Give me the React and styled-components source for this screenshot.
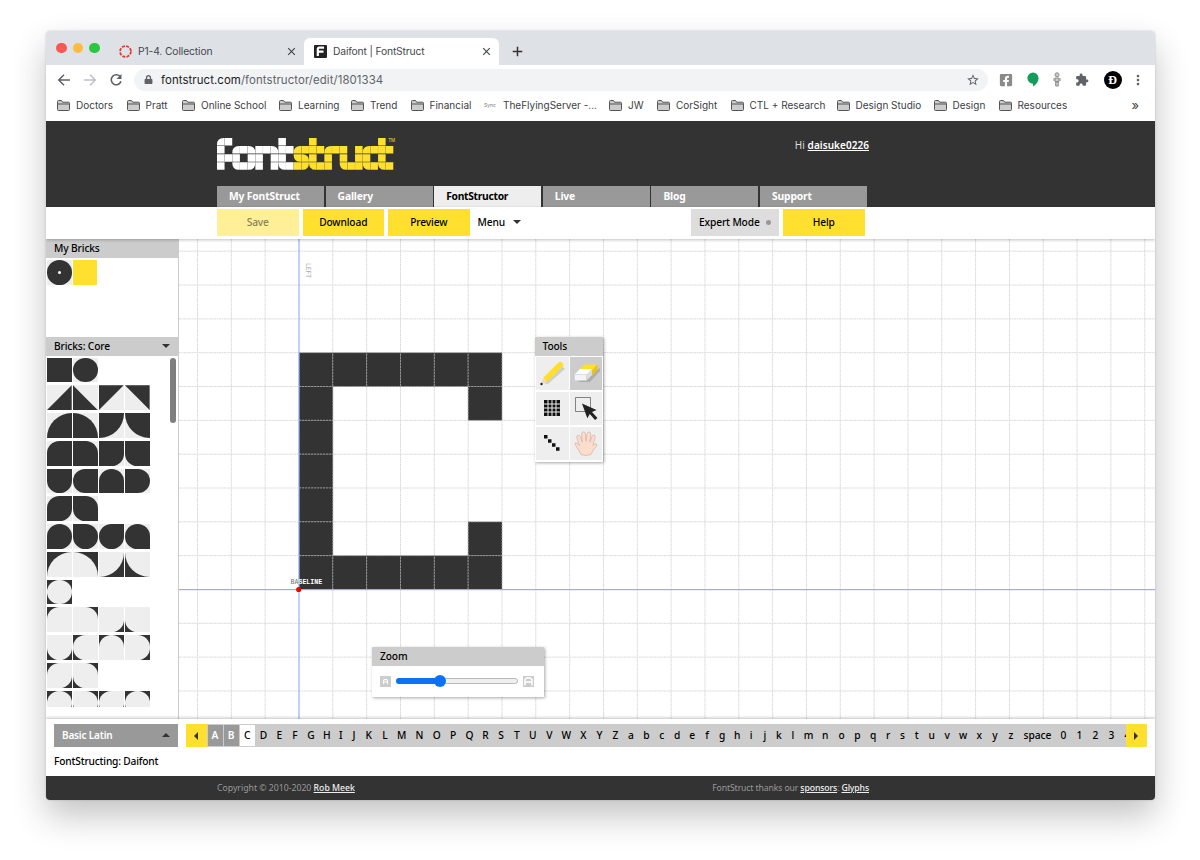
import React, { useState } from "react";
import styled, { createGlobalStyle } from "styled-components";
import { FaFacebookSquare, FaLock } from "react-icons/fa";
import { MdExtension, MdStarBorder, MdMoreVert } from "react-icons/md";

const GlobalStyle = createGlobalStyle`
  * {
    box-sizing: border-box;
  }

  body {
    margin: 0;
    background: #fff;
    overflow: hidden;
  }
`;

const Desktop = styled.div`
  height: 860px;
  padding: 31px 46px 0;
  font-family: "Noto Sans", "Open Sans", sans-serif;
  font-size: 10px;
  color: #000;
  white-space: nowrap;
`;

const Window = styled.div`
  width: 1108.5px;
  height: 768.5px;
  display: flex;
  flex-direction: column;
  border-radius: 4px;
  overflow: hidden;
  background: #fff;
  box-shadow: 0 0 2px rgba(0, 0, 0, 0.22), 0 16px 34px rgba(0, 0, 0, 0.24);
`;

/* ---------- browser ---------- */

const TabStrip = styled.div`
  height: 34px;
  flex: none;
  display: flex;
  align-items: flex-end;
  background: #dee1e6;
  font-family: Inter, sans-serif;
`;

const Lights = styled.div`
  display: flex;
  gap: 6px;
  height: 34px;
  align-items: center;
  padding: 0 0 0 10px;
  width: 65px;
`;

const Light = styled.span`
  width: 10.5px;
  height: 10.5px;
  border-radius: 50%;
  background: ${(props) => props.$color};
`;

const BrowserTab = styled.div`
  display: flex;
  align-items: center;
  width: ${(props) => props.$width}px;
  height: 27px;
  padding: 0 8px 1px ${(props) => (props.$active ? 10 : 8)}px;
  gap: 6px;
  border-radius: 6px 6px 0 0;
  background: ${(props) => (props.$active ? "#fff" : "transparent")};
  color: #45484c;
  font-size: 10.3px;
  letter-spacing: ${(props) => (props.$active ? -0.16 : -0.12)}px;
`;

const TabTitle = styled.span`
  flex: 1;
`;

const NewTab = styled.div`
  display: flex;
  align-items: center;
  height: 27px;
  padding-left: 13px;
`;

const AddressRow = styled.div`
  height: 29px;
  flex: none;
  display: flex;
  align-items: center;
  padding: 0 9px 0 11px;
  color: #5f6368;
  font-family: Inter, sans-serif;
`;

const NavIcons = styled.div`
  display: flex;
  gap: 12px;
  width: 77px;
`;

const AddressBar = styled.div`
  display: flex;
  align-items: center;
  width: 854px;
  height: 22px;
  padding: 0 8px 0 10px;
  border-radius: 11px;
  background: #f1f3f4;
  font-size: 11.4px;
  letter-spacing: 0.09px;
`;

const Url = styled.span`
  flex: 1;
  padding-left: 8px;
  color: #5f6368;

  b {
    font-weight: 400;
    color: #202124;
  }
`;

const Extensions = styled.div`
  flex: 1;
  display: flex;
  align-items: center;
  justify-content: space-between;
  padding-left: 11px;
`;

const ExtensionGroup = styled.div`
  display: flex;
  align-items: center;
  gap: 8px;
`;

const Avatar = styled.span`
  width: 18px;
  height: 18px;
  border-radius: 50%;
  background: #000;
  color: #fff;
  font: bold 12px/18px "Liberation Serif", serif;
  text-align: center;
`;

const Bookmarks = styled.div`
  height: 27px;
  flex: none;
  display: flex;
  align-items: center;
  padding: 0 0 5px 11px;
  color: #3c4043;
  font-family: Inter, sans-serif;
  font-size: 10px;
`;

const Bookmark = styled.div`
  display: flex;
  align-items: center;
  gap: 6px;
  width: ${(props) => props.$width}px;
`;

const SyncIcon = styled.span`
  font-size: 5px;
  width: 13px;
  color: #777;
`;

const More = styled.span`
  font-size: 13px;
`;

/* ---------- site header ---------- */

const Header = styled.header`
  height: 86px;
  flex: none;
  display: flex;
  flex-direction: column;
  justify-content: space-between;
  padding: 16.5px 0 0 171px;
  background: #333;
  color: #fff;
`;

const HeaderTop = styled.div`
  display: flex;
  justify-content: space-between;
  width: 652px;
`;

const Hello = styled.div`
  font-size: 10px;
  line-height: 14px;
  letter-spacing: 0.05px;
  color: #ddd;
`;

const Link = styled.a`
  color: ${(props) => props.$color || "#fff"};
  font-weight: ${(props) => props.$weight || 600};
  text-decoration: underline;
`;

const NavTabs = styled.nav`
  display: flex;
  gap: 1.6px;
`;

const NavTab = styled.a`
  width: 107px;
  height: 21px;
  padding-left: 12px;
  line-height: 21px;
  font-size: 10.3px;
  font-weight: 700;
  letter-spacing: ${(props) => (props.$active ? -0.3 : -0.15)}px;
  background: ${(props) => (props.$active ? "#eee" : "#999")};
  color: ${(props) => (props.$active ? "#000" : "#fff")};
`;

const Toolbar = styled.div`
  height: 32px;
  flex: none;
  display: flex;
  gap: 4px;
  padding: 2px 0 0 171px;
  background: #fff;
  box-shadow: 0 1px 3px rgba(0, 0, 0, 0.25);
  z-index: 1;
`;

const Button = styled.button`
  width: ${(props) => props.$width || 81.5}px;
  height: 26.5px;
  padding: 0;
  border: 0;
  background: ${(props) => props.$bg || "#ffe02f"};
  color: #000;
  font: 500 10.2px "Noto Sans", sans-serif;
  letter-spacing: -0.12px;

  &:disabled {
    background: #fff097;
    color: #88825c;
  }
`;

const MenuButton = styled(Button)`
  display: flex;
  align-items: center;
  gap: 8px;
  padding-left: 4px;
  margin-right: 73.5px;
`;

const ExpertButton = styled(Button)`
  display: flex;
  align-items: center;
  justify-content: space-between;
  padding: 0 8px;
`;

const Dot = styled.span`
  width: 5px;
  height: 5px;
  border-radius: 50%;
  background: #999;
`;

const Caret = styled.span`
  border-left: 4px solid transparent;
  border-right: 4px solid transparent;
  ${(props) =>
    props.$up
      ? "border-bottom: 4.5px solid #333;"
      : "border-top: 4.5px solid #333;"}
`;

const SideCaret = styled.span`
  border-top: 4px solid transparent;
  border-bottom: 4px solid transparent;
  ${(props) =>
    props.$left
      ? "border-right: 4px solid #333;"
      : "border-left: 4px solid #333;"}
`;

/* ---------- editor ---------- */

const Editor = styled.main`
  display: flex;
  height: 479.5px;
  flex: none;
  overflow: hidden;
`;

const Sidebar = styled.aside`
  width: 132.5px;
  flex: none;
  border-right: 1px solid #ccc;
`;

const PanelTitle = styled.div`
  display: flex;
  align-items: center;
  justify-content: space-between;
  height: 19px;
  padding: 0 8px 1px;
  background: #ccc;
  font-size: 10.2px;
  font-weight: 500;
  letter-spacing: -0.12px;
`;

const MyBricks = styled.div`
  display: flex;
  gap: 1px;
  height: 79px;
  padding: 2px 0 0 1px;
`;

const BrickArea = styled.div`
  display: flex;
  justify-content: space-between;
  height: 351.5px;
  padding: 1.6px 2px 0 1px;
  overflow: hidden;
`;

const BrickRows = styled.div`
  display: flex;
  flex-direction: column;
  gap: 3px;
  height: 349.5px;
  overflow: hidden;
`;

const BrickRow = styled.div`
  display: flex;
  flex: none;
  gap: 1.3px;
`;

const BrickTile = styled.div`
  width: 24.7px;
  height: 24.75px;
  background: ${(props) => (props.$invert ? "#333" : "#eee")};
`;

const BrickShape = styled.div`
  display: flex;
  align-items: center;
  justify-content: center;
  height: 100%;
  background: ${(props) => props.$color};
  border-radius: ${(props) => props.$round || 0};
  clip-path: ${(props) => props.$clip || "none"};
`;

const Pinhole = styled.span`
  width: 3px;
  height: 3px;
  border-radius: 50%;
  background: #fff;
`;

const ScrollThumb = styled.div`
  width: 5.5px;
  height: 65px;
  border-radius: 3px;
  background: #7f7f7f;
`;

const Canvas = styled.div`
  position: relative;
  flex: 1;
`;

const GlyphSvg = styled.svg`
  display: block;
`;

const Floating = styled.section`
  position: absolute;
  left: ${(props) => props.$left}px;
  top: ${(props) => props.$top}px;
  width: ${(props) => props.$width}px;
  background: #fff;
  box-shadow: 1px 1px 3px rgba(0, 0, 0, 0.35);
`;

const ToolGrid = styled.div`
  display: grid;
  grid-template-columns: 33px 32.5px;
  grid-auto-rows: 33px;
  gap: 2px 1px;
  padding: 1px 1px 2px;
`;

const Tool = styled.div`
  display: flex;
  align-items: center;
  justify-content: center;
  background: ${(props) => (props.$active ? "#ccc" : "#eee")};
`;

const ZoomBody = styled.div`
  display: flex;
  align-items: center;
  gap: 5px;
  height: 31px;
  padding: 0 10px 0 8px;
`;

const Track = styled.div`
  flex: 1;
  display: flex;
  align-items: center;
  height: 6.5px;
  border: 1px solid #b9b9b9;
  border-radius: 4px;
  background: #efefef;
`;

const TrackFill = styled.div`
  height: 6.5px;
  margin-left: -1px;
  border-radius: 4px 0 0 4px;
  background: #0b72f5;
`;

const Thumb = styled.span`
  flex: none;
  width: 12px;
  height: 12px;
  margin-left: -6px;
  border-radius: 50%;
  background: #0b72f5;
`;

/* ---------- character strip and footer ---------- */

const BottomBar = styled.div`
  flex: 1;
  padding: 5.5px 8px 0;
  box-shadow: 0 -1px 3px rgba(0, 0, 0, 0.25);
  background: #fff;
  z-index: 1;
`;

const CharRow = styled.div`
  display: flex;
  height: 23px;
`;

const SetSelect = styled.div`
  display: flex;
  align-items: center;
  justify-content: space-between;
  width: 124px;
  margin-right: 8px;
  padding: 0 8px 1px;
  background: #999;
  color: #fff;
  font-size: 10px;
  font-weight: 600;
  letter-spacing: -0.17px;
`;

const Arrow = styled.div`
  display: flex;
  align-items: center;
  justify-content: center;
  flex: none;
  width: 20.5px;
  background: #ffe02f;
`;

const Chars = styled.div`
  flex: 1;
  display: flex;
  align-items: center;
  overflow: hidden;
  padding-left: 1px;
  background: #ccc;
`;

const Char = styled.span`
  flex: none;
  width: ${(props) => props.$width}px;
  height: 21px;
  line-height: 20px;
  text-align: center;
  font-size: 10.2px;
  font-weight: ${(props) => (props.$state === "done" ? 600 : 500)};
  color: ${(props) => (props.$state === "done" ? "#fff" : "#000")};
  background: ${(props) =>
    ({ done: "#999", current: "#fff" }[props.$state] || "transparent")};
  border-right: 1px solid ${(props) => (props.$state ? "#ccc" : "transparent")};
`;

const Status = styled.div`
  padding-top: 7px;
  line-height: 15px;
  font-size: 10.2px;
  font-weight: 500;
  letter-spacing: -0.17px;
`;

const Footer = styled.footer`
  display: flex;
  align-items: center;
  justify-content: space-between;
  height: 23.5px;
  flex: none;
  padding: 0 285.5px 0 171px;
  background: #333;
  color: #999;
  font-size: 8.7px;
  letter-spacing: 0;
  z-index: 1;
`;

const Sponsors = styled.span`
  letter-spacing: -0.13px;
`;

/* ---------- data ---------- */

const bookmarks = [
  ["Doctors", 69.5],
  ["Pratt", 55.5],
  ["Online School", 97],
  ["Learning", 72],
  ["Trend", 59.5],
  ["Financial", 73.5],
  ["TheFlyingServer -...", 125],
  ["JW", 48],
  ["CorSight", 73.5],
  ["CTL + Research", 106],
  ["Design Studio", 97],
  ["Design", 65],
  ["Resources", 133],
];

const navItems = ["My FontStruct", "Gallery", "FontStructor", "Live", "Blog", "Support"];

// [row, col, rounded corner]
const logoBricks = [
  [0, 0, "tl"], [0, 1], [1, 0], [2, 0], [2, 1], [3, 0],
  [1, 2, "tl"], [1, 3], [1, 4, "tr"], [2, 2], [2, 4],
  [3, 2, "bl"], [3, 3], [3, 4, "br"],
  [1, 5], [1, 6], [1, 7, "tr"], [2, 5], [2, 7], [3, 5], [3, 7],
  [0, 8], [1, 8], [1, 9], [2, 8], [3, 8, "bl"], [3, 9],
  [1, 10, "tl"], [1, 11], [2, 10, "bl"], [2, 11, "tr"],
  [3, 10], [3, 11, "br"],
  [0, 12], [1, 12], [1, 13], [2, 12], [3, 12, "bl"], [3, 13],
  [1, 14, "tl"], [1, 15], [2, 14], [3, 14],
  [1, 16], [1, 18], [2, 16], [2, 18], [3, 16, "bl"], [3, 17], [3, 18],
  [1, 19, "tl"], [1, 20], [2, 19], [3, 19, "bl"], [3, 20],
  [0, 21], [1, 21], [1, 22], [2, 21], [3, 21, "bl"], [3, 22],
];

const logoShapes = {
  tl: "M0 8V7Q0 0 7 0H8V8z",
  tr: "M0 0H1Q8 0 8 7V8H0z",
  bl: "M0 0H8V8H7Q0 8 0 1z",
  br: "M0 0H8V1Q8 8 1 8H0z",
  all: "M0 0H8V8H0z",
};

const h = "50%";
const corner = (tl, tr, br, bl) => `${tl} ${tr} ${br} ${bl}`;
const full = [corner("100%", 0, 0, 0), corner(0, "100%", 0, 0), corner(0, 0, "100%", 0), corner(0, 0, 0, "100%")];
const single = [corner(h, 0, 0, 0), corner(0, h, 0, 0), corner(0, 0, h, 0), corner(0, 0, 0, h)];
const pair = [corner(0, 0, h, h), corner(h, 0, 0, h), corner(h, h, 0, 0), corner(0, h, h, 0)];
const diagonal = [corner(h, 0, h, 0), corner(0, h, 0, h)];
const triple = [corner(h, h, h, 0), corner(0, h, h, h), corner(h, 0, h, h), corner(h, h, 0, h)];

const brickRows = [
  { round: [0, h] },
  {
    clip: [
      "polygon(0 100%, 100% 0, 100% 100%)",
      "polygon(0 0, 100% 100%, 0 100%)",
      "polygon(0 0, 100% 0, 0 100%)",
      "polygon(0 0, 100% 0, 100% 100%)",
    ],
  },
  { round: full },
  { round: single },
  { round: pair },
  { round: diagonal },
  { round: triple },
  { round: full, invert: true },
  { round: [h], invert: true },
  { round: single, invert: true },
  { round: pair, invert: true },
  { round: diagonal, invert: true },
  { round: triple, invert: true },
];

const chars = [..."ABCDEFGHIJKLMNOPQRSTUVWXYZabcdefghijklmnopqrstuvwxyz", "space", ..."01234"];

// centre of every character on the strip
const stops = [
  215.5, 231.5, 247.5, 264, 280, 295.5, 311, 328, 342, 353, 369.5, 385, 402, 420,
  437.5, 453.5, 470, 486, 501.5, 517, 533.5, 549.5, 567, 584, 600, 616, 631.5,
  647, 662.5, 677.5, 693, 707.5, 722.5, 738, 752, 765, 779.5, 793, 808.5, 826,
  842, 858, 874, 889, 903, 917, 932, 947.5, 963.5, 980, 995.5, 1010.5, 1037,
  1063, 1079, 1095, 1111, 1127, 1143,
];
const charWidth = (i) => {
  // "space" is wider than its neighbours
  if (chars[i] === "z") return 17;
  if (chars[i] === "space") return 36;
  if (chars[i] === "0") return 16;
  if (i === 0) return 16;
  return (stops[i + 1] - stops[i - 1]) / 2;
};

const CELL = 33.83;
const ORIGIN = { x: 120, y: 350.5 };
const glyph = [
  "######",
  "#....#",
  "#.....",
  "#.....",
  "#.....",
  "#....#",
  "######",
];

/* ---------- icons ---------- */

const Logo = () => (
  <svg width="180" height="33" viewBox="0 0 180 33">
    {logoBricks.map(([row, col, round]) => (
      <path
        key={`${row}-${col}`}
        d={logoShapes[round || "all"]}
        transform={`translate(${col * 7.67} ${row * 8.1}) scale(.945 .94)`}
        fill={col < 10 ? "#fff" : "#ffe02f"}
      />
    ))}
    <text x="171.5" y="4" fill="#ffe02f" fontSize="4.500">
      TM
    </text>
  </svg>
);

const Cross = () => (
  <svg width="9" height="9" viewBox="0 0 9 9" stroke="#45484c" strokeWidth="1.2">
    <path d="M1.2 1.2l6.6 6.6M7.8 1.2L1.2 7.8" />
  </svg>
);

const Folder = () => (
  <svg width="13" height="11" viewBox="0 0 13 11" stroke="#555" strokeWidth="1">
    <path d="M.5 9.5v-8q0-1 1-1h3l1.2 1.7h5.8q1 0 1 1v6.3q0 1-1 1h-10q-1 0-1-1z" fill="#ccc" />
    <path d="M1 4h11" />
  </svg>
);

const Pencil = () => (
  <svg width="28" height="28" viewBox="0 0 28 28">
    <path d="M5 24l19-17 3 3-17 15z" fill="#000" opacity=".13" />
    <path d="M5 19L21 3q1.600-.8 3.600 1.200 1.400 1.600.4 3.200L9 23z" fill="#ffdf2b" />
    <path d="M5 19l4 4-5.400 2z" fill="#f3d8b7" />
    <circle cx="3.500" cy="25" r="1.200" fill="#222" />
  </svg>
);

const Eraser = () => (
  <svg width="28" height="26" viewBox="0 0 28 26">
    <path d="M6 22h12l10-11v-3z" fill="#000" opacity=".15" />
    <path d="M8 9l4.500-4.500h13L20 11l-1-2z" fill="#ffdf2b" />
    <path d="M25.500 4.500v5.500L19.500 16.500V11z" fill="#e8c11c" />
    <path d="M2.500 14.500L8 9h12l-5.500 5.500z" fill="#fff" />
    <path d="M2.500 14.500h12v6h-12z" fill="#f4f4f4" stroke="#ccc" strokeWidth=".5" />
    <path d="M14.500 14.500l5.500-5.500v6l-5.500 5.500z" fill="#ddd" />
  </svg>
);

const GridIcon = () => (
  <svg width="16" height="16" viewBox="0 0 16 16">
    <path d="M0 0h16v16H0z" fill="#111" />
    <path d="M4 0v16M8 0v16M12 0v16M0 4h16M0 8h16M0 12h16" stroke="#eee" strokeWidth="1" />
  </svg>
);

const SelectIcon = () => (
  <svg width="26" height="26" viewBox="0 0 26 26">
    <path d="M2.500 2.500h15v14h-15z" fill="none" stroke="#555" strokeWidth=".7" />
    <path d="M9 8.500l14.500 6.500-4.500 2 5.500 6-2.500 2-5.200-6-2.500 4.300z" fill="#222" />
  </svg>
);

const LineIcon = () => (
  <svg width="16" height="16" viewBox="0 0 16 16" fill="#111">
    <path d="M0 0h3.500v3.500H0zM4 4.200h3.500v3.500H4zM8 8.300h3.500v3.500H8zM12 12.300h3.500v3.500H12z" />
  </svg>
);

const HandIcon = () => (
  <svg width="26" height="26" viewBox="0 0 26 26">
    <path
      d="M8 24.500q-2-4-5.600-9.500-1.200-2 .5-2.200 1.600 0 3.600 2.700L3.700 7.500q-.2-2 1.500-2.200t2.300 1.800l1.700 5L8.600 3.900q.1-1.900 1.800-2t2 1.900l.6 7.500 1.200-7.900q.5-1.700 2-1.400t1.600 2.100l-.9 8 2.200-6q.8-1.600 2.200-1t.9 2.200l-2.300 8.200q1.700-2.300 3.400-1.700 1.400.8 0 2.700Q19.500 20 18 24.500 13 26.500 8 24.500z"
      fill="#fcdccd"
      stroke="#c9a99c"
      strokeWidth=".6"
    />
  </svg>
);

const ZoomIcon = ({ large }) => (
  <svg width="11" height="11" viewBox="0 0 11 11">
    <path d="M0 0h11v11H0z" fill="#ccc" />
    {large ? (
      <path d="M2 9.500v-6l1.500-1.500h4l1.500 1.500v6M2 6h7" fill="none" stroke="#fff" strokeWidth="1.500" />
    ) : (
      <path d="M3.500 8V4.500l1-1h2l1 1V8M3.500 6h4" fill="none" stroke="#fff" strokeWidth="1.100" />
    )}
  </svg>
);

const GlyphCanvas = () => {
  const columns = Array.from({ length: 29 }, (_, i) => ORIGIN.x + (i - 3) * CELL);
  const rows = Array.from({ length: 14 }, (_, i) => ORIGIN.y + (i - 10) * CELL);
  const top = ORIGIN.y - glyph.length * CELL;

  return (
    <GlyphSvg width="976" height="479.5">
      {columns.map((x) => (
        <path key={x} d={`M${x} 0V480`} stroke="#dcdcdc" strokeDasharray="2 .5" />
      ))}
      {rows.map((y) => (
        <path key={y} d={`M0 ${y}H976`} stroke="#dcdcdc" strokeDasharray="2 .5" />
      ))}
      {glyph.map((line, r) =>
        [...line].map(
          (c, i) =>
            c === "#" && (
              <rect
                key={`${r}-${i}`}
                x={ORIGIN.x + i * CELL}
                y={top + r * CELL}
                width={CELL}
                height={CELL}
                fill="#333"
                stroke="#a8a8a8"
                strokeWidth=".7"
                strokeDasharray="2 1"
              />
            )
        )
      )}
      {/* left side bearing and baseline */}
      <rect x={ORIGIN.x - 0.5} y="0" width="1" height="480" fill="#8ab4f8" />
      <rect x="0" y={ORIGIN.y - 0.5} width="976" height="1.2" fill="#8ab4f8" />
      <text x="111.500" y="344.500" fill="#999" fontFamily="Liberation Mono, monospace" fontWeight="bold" fontSize="6.600">
        BA<tspan fill="#fff">SELINE</tspan>
      </text>
      <text transform="translate(126.500 24) rotate(90)" fill="#aaa" fontFamily="Liberation Mono, monospace" fontSize="6.300">
        LEFT
      </text>
      <circle cx={ORIGIN.x - 0.3} cy={ORIGIN.y} r="2.600" fill="#e00" />
    </GlyphSvg>
  );
};

const App = () => {
  const [tool, setTool] = useState("eraser");
  const zoom = 37;

  const tools = [
    ["pencil", <Pencil />],
    ["eraser", <Eraser />],
    ["rectangle", <GridIcon />],
    ["select", <SelectIcon />],
    ["line", <LineIcon />],
    ["hand", <HandIcon />],
  ];

  return (
    <Desktop>
      <GlobalStyle />
      <Window>
        <TabStrip>
          <Lights>
            <Light $color="#fc5753" />
            <Light $color="#fdbc40" />
            <Light $color="#28c840" />
          </Lights>
          <BrowserTab $width={193}>
            <svg width="13" height="13" viewBox="0 0 13 13">
              <circle cx="6.500" cy="6.500" r="5.400" fill="none" stroke="#e13b2b" strokeWidth="1.800" strokeDasharray="3 1.240" />
            </svg>
            <TabTitle>P1-4. Collection</TabTitle>
            <Cross />
          </BrowserTab>
          <BrowserTab $width={195} $active>
            <svg width="13" height="13" viewBox="0 0 13 13">
              <rect width="13" height="13" rx="1" fill="#222" />
              <path d="M3.800 11V4.200q0-1.500 1.500-1.500H10M4 6.700h5.500" fill="none" stroke="#fff" strokeWidth="2.200" />
            </svg>
            <TabTitle>Daifont | FontStruct</TabTitle>
            <Cross />
          </BrowserTab>
          <NewTab>
            <svg width="11" height="11" viewBox="0 0 11 11" stroke="#333" strokeWidth="1.500">
              <path d="M5.500.7v9.600M.7 5.500h9.600" />
            </svg>
          </NewTab>
        </TabStrip>

        <AddressRow>
          <NavIcons>
            <svg width="14" height="14" viewBox="0 0 14 14" fill="none" stroke="#5f6368" strokeWidth="1.500">
              <path d="M13 7H2M7 1.700L1.700 7 7 12.300" />
            </svg>
            <svg width="14" height="14" viewBox="0 0 14 14" fill="none" stroke="#bdc1c6" strokeWidth="1.500">
              <path d="M1 7h11M7 1.700L12.300 7 7 12.300" />
            </svg>
            <svg width="14" height="14" viewBox="0 0 14 14" fill="none" stroke="#5f6368" strokeWidth="1.600">
              <path d="M11.400 4A5 5 0 1 0 12 8.300" />
              <path d="M12.500 1v5h-5z" fill="#5f6368" stroke="none" />
            </svg>
          </NavIcons>
          <AddressBar>
            <FaLock size={9} />
            <Url>
              <b>fontstruct.com</b>/fontstructor/edit/1801334
            </Url>
            <MdStarBorder size={14} />
          </AddressBar>
          <Extensions>
            <FaFacebookSquare size={14} color="#8a8a8a" />
            <svg width="12" height="15" viewBox="0 0 12 15">
              <path d="M6 .5a5.500 5.500 0 0 1 5.500 5.700c0 3.300-2.500 6.600-5.500 8.300v-2.800A5.500 5.500 0 0 1 6 .5z" fill="#129d58" />
            </svg>
            <svg width="8" height="15" viewBox="0 0 8 15" fill="#ccc" stroke="#8c8c8c">
              <circle cx="4" cy="2.800" r="2" />
              <path d="M2 6h4v3.500H2zM2.700 10h2.600v4H2.700zM1 6v3M7 6v3" />
            </svg>
            <MdExtension size={14} color="#5f6368" />
            <ExtensionGroup>
              <Avatar>Đ</Avatar>
              <MdMoreVert size={16} />
            </ExtensionGroup>
          </Extensions>
        </AddressRow>

        <Bookmarks>
          {bookmarks.map(([label, width]) => (
            <Bookmark key={label} $width={width}>
              {label.startsWith("The") ? <SyncIcon>Sync</SyncIcon> : <Folder />}
              {label}
            </Bookmark>
          ))}
          <More>»</More>
        </Bookmarks>

        <Header>
          <HeaderTop>
            <Logo />
            <Hello>
              Hi <Link>daisuke0226</Link>
            </Hello>
          </HeaderTop>
          <NavTabs>
            {navItems.map((item) => (
              <NavTab key={item} $active={item === "FontStructor"}>
                {item}
              </NavTab>
            ))}
          </NavTabs>
        </Header>

        <Toolbar>
          <Button disabled>Save</Button>
          <Button>Download</Button>
          <Button>Preview</Button>
          <MenuButton $bg="transparent" $width={140}>
            Menu <Caret />
          </MenuButton>
          <ExpertButton $bg="#ddd" $width={88}>
            Expert Mode <Dot />
          </ExpertButton>
          <Button>Help</Button>
        </Toolbar>

        <Editor>
          <Sidebar>
            <PanelTitle>My Bricks</PanelTitle>
            <MyBricks>
              <BrickTile>
                <BrickShape $color="#333" $round={h}>
                  <Pinhole />
                </BrickShape>
              </BrickTile>
              <BrickTile>
                <BrickShape $color="#ffe02f" />
              </BrickTile>
            </MyBricks>
            <PanelTitle>
              Bricks: Core <Caret />
            </PanelTitle>
            <BrickArea>
              <BrickRows>
                {brickRows.map(({ round, clip, invert }, r) => (
                  <BrickRow key={r}>
                    {(round || clip).map((shape, i) => (
                      <BrickTile key={i} $invert={invert}>
                        <BrickShape
                          $color={invert ? "#eee" : "#333"}
                          $round={round && shape}
                          $clip={clip && shape}
                        />
                      </BrickTile>
                    ))}
                  </BrickRow>
                ))}
              </BrickRows>
              <ScrollThumb />
            </BrickArea>
          </Sidebar>

          <Canvas>
            <GlyphCanvas />
            <Floating $left={356} $top={97.5} $width={68.5}>
              <PanelTitle>Tools</PanelTitle>
              <ToolGrid>
                {tools.map(([name, icon]) => (
                  <Tool key={name} $active={tool === name} onClick={() => setTool(name)}>
                    {icon}
                  </Tool>
                ))}
              </ToolGrid>
            </Floating>
            <Floating $left={193.5} $top={407.5} $width={171.5}>
              <PanelTitle>Zoom</PanelTitle>
              <ZoomBody>
                <ZoomIcon />
                <Track>
                  <TrackFill style={{ width: `${zoom}%` }} />
                  <Thumb />
                </Track>
                <ZoomIcon large />
              </ZoomBody>
            </Floating>
          </Canvas>
        </Editor>

        <BottomBar>
          <CharRow>
            <SetSelect>
              Basic Latin <Caret $up />
            </SetSelect>
            <Arrow>
              <SideCaret $left />
            </Arrow>
            <Chars>
              {chars.map((char, i) => (
                <Char key={char} $width={charWidth(i)} $state={i < 2 ? "done" : i === 2 ? "current" : ""}>
                  {char}
                </Char>
              ))}
            </Chars>
            <Arrow>
              <SideCaret />
            </Arrow>
          </CharRow>
          <Status>FontStructing: Daifont</Status>
        </BottomBar>

        <Footer>
          <span>
            Copyright © 2010-2020 <Link $color="#eee" $weight={500}>Rob Meek</Link>
          </span>
          <Sponsors>
            FontStruct thanks our <Link $color="#eee" $weight={500}>sponsors</Link>:{" "}
            <Link $color="#eee" $weight={500}>Glyphs</Link>
          </Sponsors>
        </Footer>
      </Window>
    </Desktop>
  );
};

export default App;
